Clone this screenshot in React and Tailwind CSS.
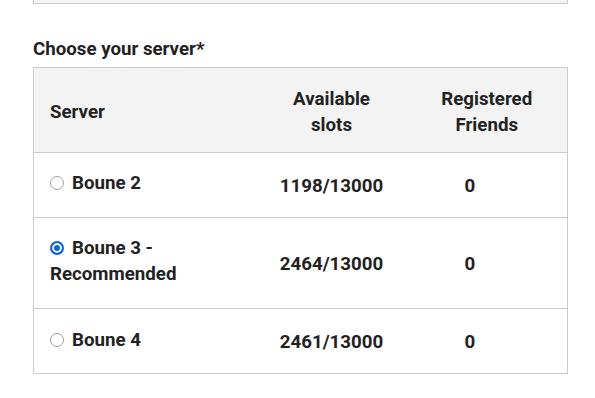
import React, { useState } from 'react';

const servers = [
  { id: 2, name: 'Boune 2', slots: '1198/13000', friends: 0 },
  { id: 3, name: 'Boune 3 - Recommended', slots: '2464/13000', friends: 0 },
  { id: 4, name: 'Boune 4', slots: '2461/13000', friends: 0 },
];

export default function App() {
  const [selected, setSelected] = useState(3);

  return (
    <div className="bg-white min-h-[398px] pl-[33px] pr-[27px] text-[#222] font-['Roboto',sans-serif] text-[18.7px] leading-[26px]">
      <div className="h-[5px] -mt-px border border-[#ccc] bg-[#f4f4f4]" />
      <h3 className="font-bold mt-[32px] mb-[5px]">Choose your server*</h3>
      <table className="w-full border-collapse border border-[#ccc]">
        <thead>
          <tr className="bg-[#f3f3f3] border-b border-[#ccc]">
            <th className="w-[223px] pt-[18px] pb-[14px] px-4 text-left font-bold align-middle">Server</th>
            <th className="w-[150px] pt-[18px] pb-[14px] text-center font-bold align-middle">
              Available
              <br />
              slots
            </th>
            <th className="pt-[18px] pb-[14px] text-center font-bold align-middle">
              Registered
              <br />
              Friends
            </th>
          </tr>
        </thead>
        <tbody>
          {servers.map((s, i) => (
            <tr key={s.id} className="border-b border-[#ccc]">
              <td className={`pl-4 pr-2 pt-[17px] align-middle ${i === 2 ? 'pb-[20px]' : 'pb-[21px]'}`}>
                <label className="block font-bold cursor-pointer">
                  <input
                    type="radio"
                    name="server"
                    checked={selected === s.id}
                    onChange={() => setSelected(s.id)}
                    className="appearance-none inline-block w-[14px] h-[14px] mr-[8px] align-[-1px] rounded-full border border-[#a0a0a8] bg-white checked:border-2 checked:border-[#0a63e8] checked:bg-[#0a63e8] checked:shadow-[inset_0_0_0_2px_white]"
                  />
                  {s.name}
                </label>
              </td>
              <td className="pt-[20px] pb-[18px] text-center font-bold align-middle">{s.slots}</td>
              <td className="pt-[20px] pb-[18px] pl-[58px] font-bold align-middle">{s.friends}</td>
            </tr>
          ))}
        </tbody>
      </table>
    </div>
  );
}
